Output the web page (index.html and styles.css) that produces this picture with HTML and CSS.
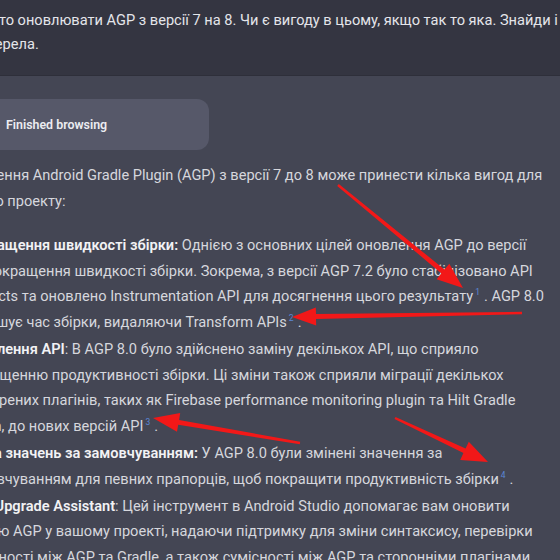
FILE: index.html
```html
<!DOCTYPE html>
<html lang="uk">
<head>
<meta charset="utf-8">
<link rel="stylesheet" href="styles.css">
</head>
<body>
<div class="page">
  <section class="user">
    <p class="user-text">варто оновлювати AGP з версії 7 на 8. Чи є вигоду в цьому, якщо так то яка. Знайди і<br>джерела.</p>
  </section>
  <section class="assistant">
    <div class="browse"><span class="browse-label">Finished browsing</span></div>
    <p class="intro">Оновлення Android Gradle Plugin (AGP) з версії 7 до 8 може принести кілька вигод для<br>вашого проекту:</p>
    <ol class="points">
      <li><b>Покращення швидкості збірки:</b> Однією з основних цілей оновлення AGP до версії<br>8 є покращення швидкості збірки. Зокрема, з версії AGP 7.2 було стабілізовано API<br>Artifacts та оновлено Instrumentation API для досягнення цього результату<sup class="cite">1</sup>. AGP 8.0<br>зменшує час збірки, видаляючи Transform APIs<sup class="cite">2</sup>.</li>
      <li><b>Оновлення API</b>: В AGP 8.0 було здійснено заміну декількох API, що сприяло<br>підвищенню продуктивності збірки. Ці зміни також сприяли міграції декількох<br>поширених плагінів, таких як Firebase performance monitoring plugin та Hilt Gradle<br>plugin, до нових версій API<sup class="cite">3</sup>.</li>
      <li><b>Зміна значень за замовчуванням:</b> У AGP 8.0 були змінені значення за<br>замовчуванням для певних прапорців, щоб покращити продуктивність збірки<sup class="cite">4</sup>.</li>
      <li><b>AGP Upgrade Assistant</b>: Цей інструмент в Android Studio допомагає вам оновити<br>версію AGP у вашому проекті, надаючи підтримку для зміни синтаксису, перевірки<br>сумісності між AGP та Gradle, а також сумісності між AGP та сторонніми плагінами</li>
    </ol>
  </section>
  <svg class="marks" width="560" height="560" viewBox="0 0 560 560">
    <polygon points="337.2,185.9 441.4,273.4 436.6,279.2 463,288 449.3,263.8 444.5,269.5 338.8,184.1"/>
    <polygon points="522,311.8 316,314.1 315.8,307.6 292,317 316.2,325.6 316,319.1 522,314.2"/>
    <polygon points="300.2,441.8 179.1,419.9 180.2,413 153,418 177,431.7 178.2,424.8 299.8,444.2"/>
    <polygon points="394.5,419.1 463.4,453.1 460.2,459.9 488,462 468.8,441.8 465.6,448.6 395.5,416.9"/>
  </svg>
</div>
</body>
</html>
```
FILE: styles.css
```css
html, body {
  margin: 0;
  padding: 0;
  background: #444654;
}
body {
  width: 560px;
  height: 560px;
  overflow: hidden;
  font-family: Roboto, "Noto Sans", sans-serif;
  font-size: 14.6px;
  color: #d6d7dd;
}
.page {
  position: relative;
  width: 560px;
  height: 560px;
  overflow: hidden;
}
.user {
  background: #343541;
  height: 76px;
  border-bottom: 1px solid #2e2f3a;
  box-sizing: border-box;
  padding-top: 8px;
}
.user-text {
  margin: 0 0 0 -25px;
  line-height: 24px;
  white-space: nowrap;
  color: #e4e5ea;
}
.assistant {
  padding-top: 23px;
  margin-left: -47px;
}
.browse {
  width: 256px;
  height: 51px;
  border-radius: 12px;
  background: #565869;
  display: flex;
  align-items: center;
  padding-left: 53px;
  box-sizing: border-box;
}
.browse-label {
  font-size: 12.4px;
  font-weight: 600;
  color: #ececf1;
}
.intro {
  margin: 13px 0 0;
  line-height: 25.6px;
  white-space: nowrap;
}
.points {
  margin: 19px 0 0;
  padding-left: 9px;
  list-style: none;
  line-height: 25.6px;
  white-space: nowrap;
}
.points li {
  margin-bottom: 1.5px;
}
.points b {
  font-weight: 600;
  color: #f2f2f5;
}
.cite {
  font-size: 8.5px;
  line-height: 0;
  vertical-align: 6px;
  color: #5b86d4;
  margin: 0 4px 0 2px;
}
.marks {
  position: absolute;
  left: 0;
  top: 0;
  pointer-events: none;
}
.marks polygon {
  fill: #f21818;
}
```
